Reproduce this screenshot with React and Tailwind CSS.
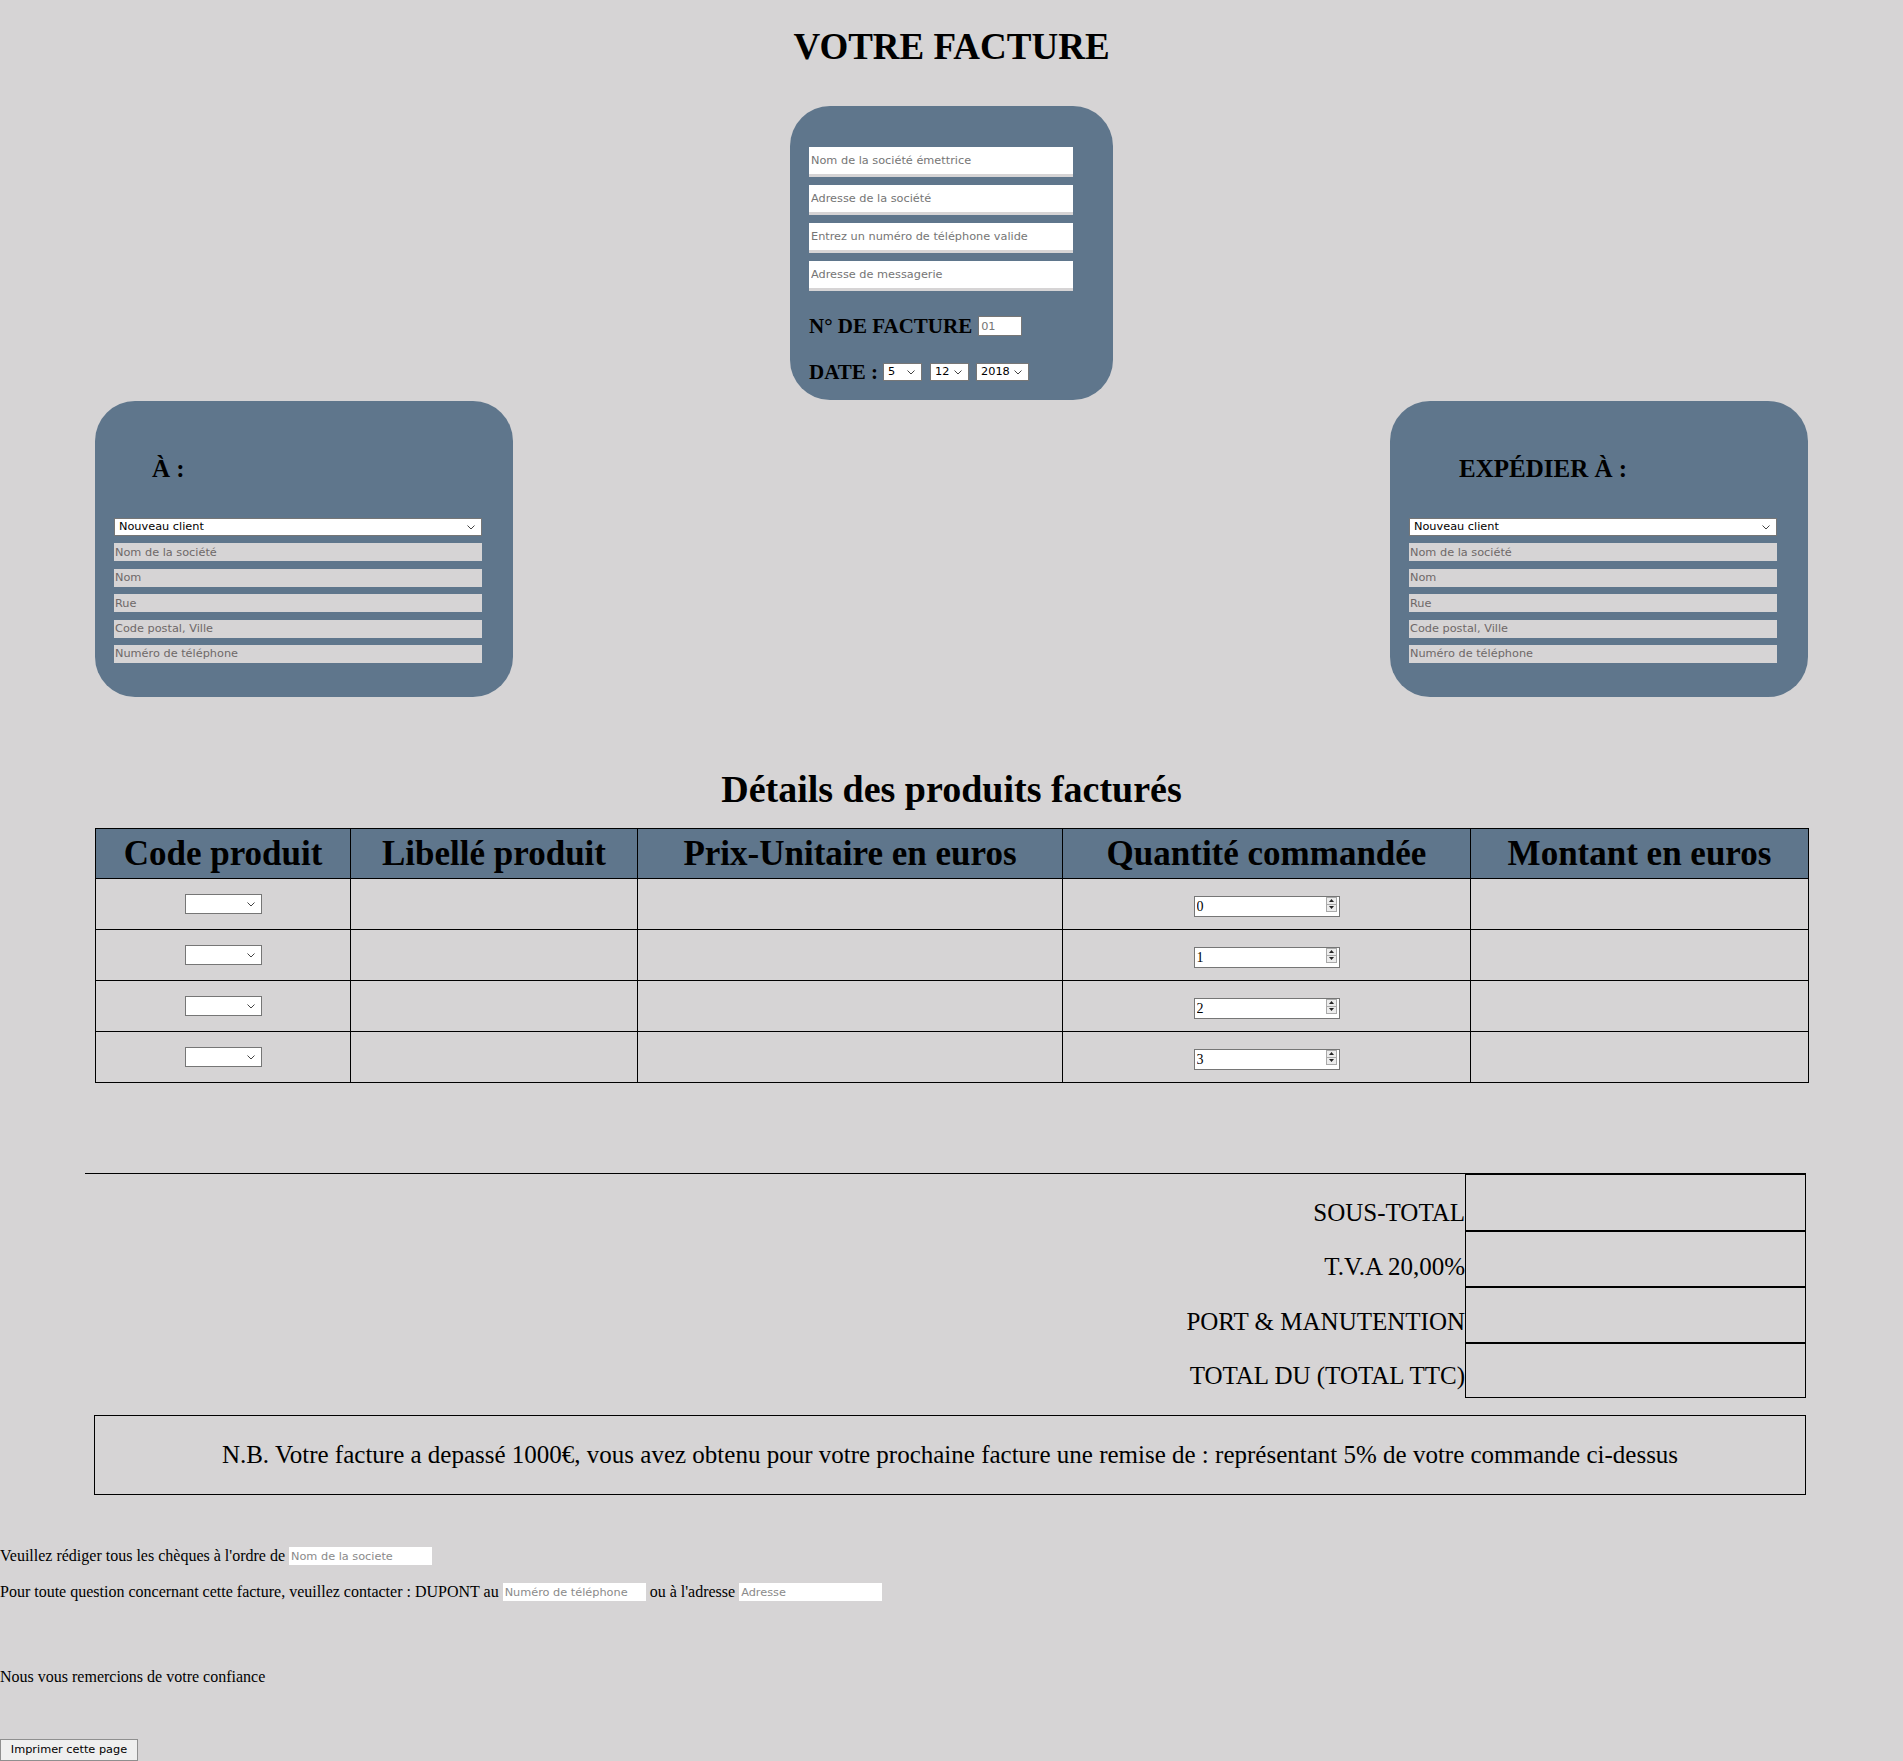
import { useState } from 'react';

// fonts used all over the page
const SANS = "font-['DejaVu_Sans',Verdana,sans-serif]";

// drop-down look (small chevron on the right)
const Select = ({ value, className }) => (
  <div
    role="combobox"
    className={`relative flex items-center border border-[#767676] bg-white pl-[4px] text-[11.3px] leading-none text-black ${SANS} ${className}`}
  >
    <span>{value}</span>
    <svg className="absolute bottom-0 right-[6px] top-0 my-auto" width="8" height="5" viewBox="0 0 8 5">
      <path d="M0.5 0.5L4 4L7.5 0.5" fill="none" stroke="#444" strokeWidth="1" />
    </svg>
  </div>
);

const QtyInput = ({ value }) => (
  <div className="relative mx-auto h-[21px] w-[146px]">
    <input
      type="text"
      defaultValue={value}
      className="h-full w-full border border-[#767676] bg-white pl-[2px] text-[14px] leading-none text-black outline-none"
    />
    {/* spin buttons */}
    <div className="absolute right-[3px] top-[3px] flex h-[15px] w-[11px] flex-col border border-[#a9a9a9] bg-[#ececec]">
      <div className="flex flex-1 items-center justify-center border-b border-[#a9a9a9]">
        <svg width="5" height="3" viewBox="0 0 5 3">
          <path d="M0 3L2.5 0L5 3Z" fill="#222" />
        </svg>
      </div>
      <div className="flex flex-1 items-center justify-center">
        <svg width="5" height="3" viewBox="0 0 5 3">
          <path d="M0 0L2.5 3L5 0Z" fill="#222" />
        </svg>
      </div>
    </div>
  </div>
);

const ClientBox = ({ title, indent }) => {
  const fields = ['Nom de la société', 'Nom', 'Rue', 'Code postal, Ville', 'Numéro de téléphone'];
  return (
    <div className="h-[296px] w-[418px] rounded-[40px] bg-[#5f768c] pl-[19px] pt-[54px]">
      <h2 className={`text-[25px] font-bold leading-[28px] ${indent}`}>{title}</h2>
      <div className="mt-[35px] flex w-[368px] flex-col gap-[7.4px]">
        <Select value="Nouveau client" className="h-[18px] w-[368px]" />
        {fields.map((f) => (
          <input
            key={f}
            type="text"
            placeholder={f}
            className={`h-[18px] w-full bg-[#d6d4d5] pl-[1px] text-[11.3px] text-black outline-none placeholder:text-[#6e6868] ${SANS}`}
          />
        ))}
      </div>
    </div>
  );
};

const headers = [
  ['Code produit', 'w-[255px]'],
  ['Libellé produit', 'w-[287px]'],
  ['Prix-Unitaire en euros', 'w-[425px]'],
  ['Quantité commandée', 'w-[408px]'],
  ['Montant en euros', 'w-[338px]'],
];

const totals = [
  ['SOUS-TOTAL', 'pb-[3px]'],
  ['T.V.A 20,00%', 'pb-[5px]'],
  ['PORT & MANUTENTION', 'pb-[6px]'],
  ['TOTAL DU (TOTAL TTC)', 'pb-[8px]'],
];

export default function App() {
  const [rows] = useState([0, 1, 2, 3]);

  return (
    <div className="min-h-[1761px] w-full bg-[#d6d4d5] font-['Liberation_Serif','Times_New_Roman',serif] text-black">
      {/* Header */}
      <h1 className="pt-[26px] text-center text-[37px] font-bold leading-[42px]">VOTRE FACTURE</h1>

      {/* Emitter box */}
      <div className="mx-auto mt-[38px] h-[294px] w-[323px] rounded-[40px] bg-[#5f768c] pl-[19px] pt-[41px]">
        <div className="flex flex-col gap-[8px]">
          {[
            'Nom de la société émettrice',
            'Adresse de la société',
            'Entrez un numéro de téléphone valide',
            'Adresse de messagerie',
          ].map((p) => (
            <input
              key={p}
              type="text"
              placeholder={p}
              className={`h-[30px] w-[264px] border-b-[3px] border-[#d6d4d5] bg-white pl-[2px] text-[11.3px] text-black outline-none placeholder:text-[#757575] ${SANS}`}
            />
          ))}
        </div>
        <div className="mt-[25px] flex h-[20px] items-center">
          <h3 className="text-[21px] font-bold leading-[22px]">N° DE FACTURE</h3>
          <input
            type="text"
            placeholder="01"
            className={`ml-[6px] h-[20px] w-[44px] border border-[#767676] bg-white pl-[2px] text-[11.3px] outline-none placeholder:text-[#757575] ${SANS}`}
          />
        </div>
        <div className="mt-[27px] flex h-[18px] items-center">
          <h3 className="text-[21px] font-bold leading-[22px]">DATE :</h3>
          <Select value="5" className="ml-[5px] h-[18px] w-[39px]" />
          <Select value="12" className="ml-[8px] h-[18px] w-[39px]" />
          <Select value="2018" className="ml-[7px] h-[18px] w-[53px]" />
        </div>
      </div>

      {/* Billing / shipping */}
      <div className="mt-[1px] flex justify-between px-[95px]">
        <ClientBox title="À :" indent="ml-[38px]" />
        <ClientBox title="EXPÉDIER À :" indent="ml-[50px]" />
      </div>

      <h2 className="mt-[70px] text-center text-[38px] font-bold leading-[44px]">Détails des produits facturés</h2>

      {/* Products */}
      <table className="ml-[95px] mt-[17px] w-[1713px] table-fixed border-collapse">
        <thead>
          <tr>
            {headers.map(([h, w]) => (
              <th
                key={h}
                className={`${w} h-[50px] border border-black bg-[#5f768c] text-center text-[35px] font-bold leading-none`}
              >
                {h}
              </th>
            ))}
          </tr>
        </thead>
        <tbody>
          {rows.map((r) => (
            <tr key={r}>
              <td className="h-[51px] border border-black">
                <Select value="" className="mx-auto h-[20px] w-[77px]" />
              </td>
              <td className="border border-black" />
              <td className="border border-black" />
              <td className="border border-black">
                <QtyInput value={r} />
              </td>
              <td className="border border-black" />
            </tr>
          ))}
        </tbody>
      </table>

      {/* Totals */}
      <div className="ml-[85px] mt-[90px] w-[1721px] border-t border-black">
        {totals.map(([t, pb], i) => (
          <div key={t} className="flex h-[56px]">
            <div className={`flex flex-1 items-end justify-end text-[25px] leading-[28px] ${pb}`}>{t}</div>
            <div
              className={`w-[341px] border-x border-black ${i === 0 ? 'border-t' : 'border-t-2'} ${
                i === totals.length - 1 ? 'border-b' : ''
              }`}
            />
          </div>
        ))}
      </div>

      <div className="ml-[94px] mt-[17px] flex h-[80px] w-[1712px] items-center justify-center border border-black text-[25px]">
        N.B. Votre facture a depassé 1000€, vous avez obtenu pour votre prochaine facture une remise de : représentant 5% de
        votre commande ci-dessus
      </div>

      {/* Footer notes */}
      <div className="mt-[52px] flex h-[18px] items-center text-[16px]">
        <span>Veuillez rédiger tous les chèques à l'ordre de</span>
        <input
          type="text"
          placeholder="Nom de la societe"
          className={`ml-[4px] h-[18px] w-[143px] bg-white pl-[2px] text-[11.3px] outline-none placeholder:text-[#8a8a8a] ${SANS}`}
        />
      </div>
      <div className="mt-[18px] flex h-[18px] items-center text-[16px]">
        <span>Pour toute question concernant cette facture, veuillez contacter : DUPONT au</span>
        <input
          type="text"
          placeholder="Numéro de téléphone"
          className={`ml-[4px] h-[18px] w-[143px] bg-white pl-[2px] text-[11.3px] outline-none placeholder:text-[#8a8a8a] ${SANS}`}
        />
        <span className="ml-[4px]">ou à l'adresse</span>
        <input
          type="text"
          placeholder="Adresse"
          className={`ml-[4px] h-[18px] w-[143px] bg-white pl-[2px] text-[11.3px] outline-none placeholder:text-[#8a8a8a] ${SANS}`}
        />
      </div>
      <p className="mt-[67px] text-[16px] leading-[18px]">Nous vous remercions de votre confiance</p>

      <button
        type="button"
        onClick={() => window.print()}
        className={`mt-[53px] h-[22px] w-[138px] border border-[#8f8f8f] bg-[#efefef] text-[11.3px] ${SANS}`}
      >
        Imprimer cette page
      </button>
    </div>
  );
}
